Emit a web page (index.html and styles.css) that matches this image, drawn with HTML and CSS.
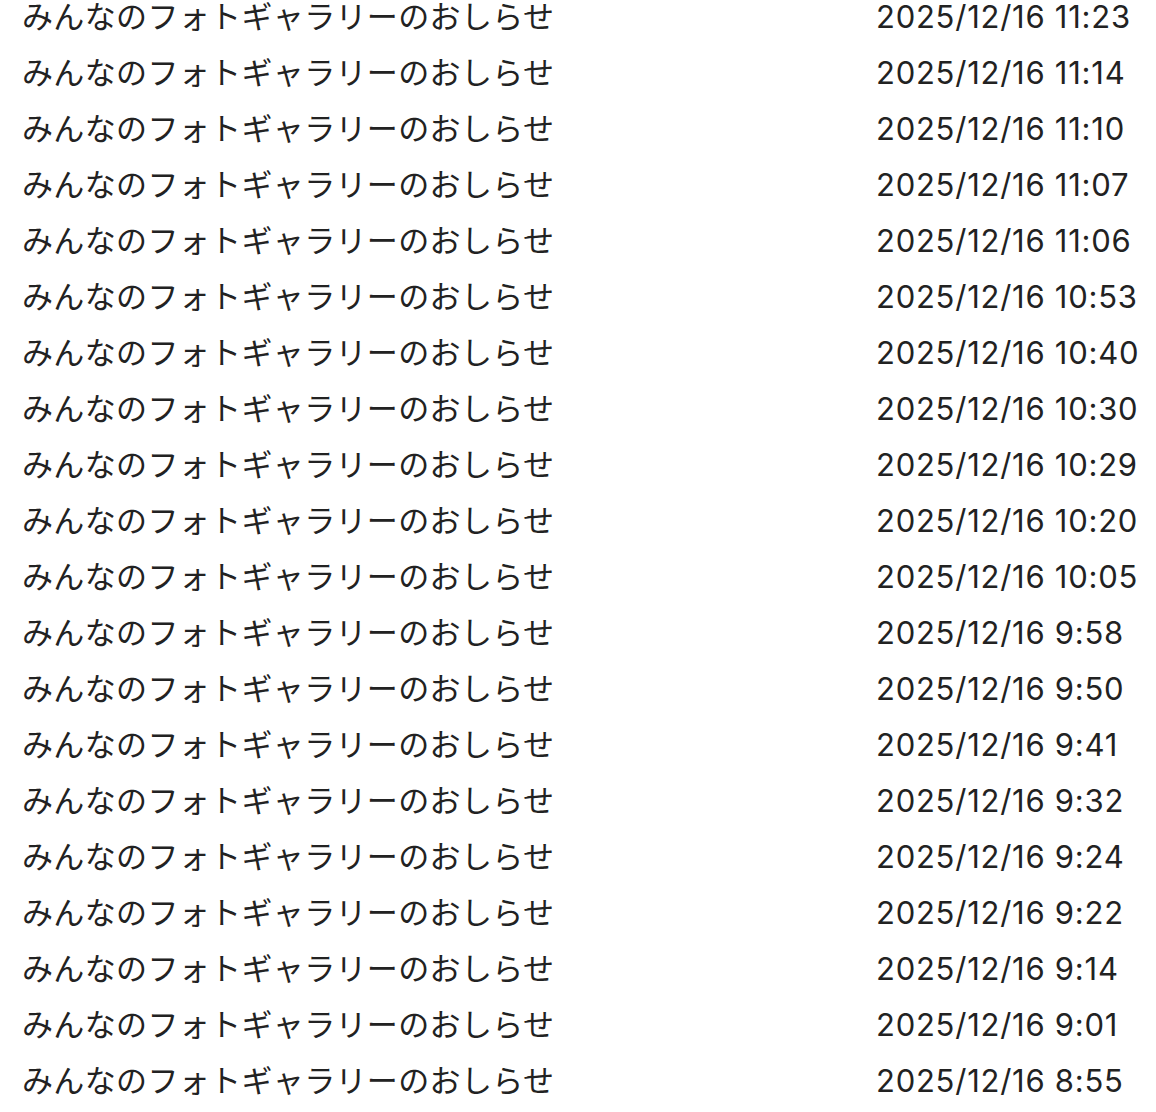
FILE: index.html
```html
<!DOCTYPE html>
<html lang="ja">
<head>
<meta charset="utf-8">
<link rel="stylesheet" href="styles.css">
</head>
<body>
<ul class="news">
  <li class="row"><span class="title">みんなのフォトギャラリーのおしらせ</span><span class="date">2025/12/16 11:23</span></li>
  <li class="row"><span class="title">みんなのフォトギャラリーのおしらせ</span><span class="date">2025/12/16 11:14</span></li>
  <li class="row"><span class="title">みんなのフォトギャラリーのおしらせ</span><span class="date">2025/12/16 11:10</span></li>
  <li class="row"><span class="title">みんなのフォトギャラリーのおしらせ</span><span class="date">2025/12/16 11:07</span></li>
  <li class="row"><span class="title">みんなのフォトギャラリーのおしらせ</span><span class="date">2025/12/16 11:06</span></li>
  <li class="row"><span class="title">みんなのフォトギャラリーのおしらせ</span><span class="date">2025/12/16 10:53</span></li>
  <li class="row"><span class="title">みんなのフォトギャラリーのおしらせ</span><span class="date">2025/12/16 10:40</span></li>
  <li class="row"><span class="title">みんなのフォトギャラリーのおしらせ</span><span class="date">2025/12/16 10:30</span></li>
  <li class="row"><span class="title">みんなのフォトギャラリーのおしらせ</span><span class="date">2025/12/16 10:29</span></li>
  <li class="row"><span class="title">みんなのフォトギャラリーのおしらせ</span><span class="date">2025/12/16 10:20</span></li>
  <li class="row"><span class="title">みんなのフォトギャラリーのおしらせ</span><span class="date">2025/12/16 10:05</span></li>
  <li class="row"><span class="title">みんなのフォトギャラリーのおしらせ</span><span class="date">2025/12/16 9:58</span></li>
  <li class="row"><span class="title">みんなのフォトギャラリーのおしらせ</span><span class="date">2025/12/16 9:50</span></li>
  <li class="row"><span class="title">みんなのフォトギャラリーのおしらせ</span><span class="date">2025/12/16 9:41</span></li>
  <li class="row"><span class="title">みんなのフォトギャラリーのおしらせ</span><span class="date">2025/12/16 9:32</span></li>
  <li class="row"><span class="title">みんなのフォトギャラリーのおしらせ</span><span class="date">2025/12/16 9:24</span></li>
  <li class="row"><span class="title">みんなのフォトギャラリーのおしらせ</span><span class="date">2025/12/16 9:22</span></li>
  <li class="row"><span class="title">みんなのフォトギャラリーのおしらせ</span><span class="date">2025/12/16 9:14</span></li>
  <li class="row"><span class="title">みんなのフォトギャラリーのおしらせ</span><span class="date">2025/12/16 9:01</span></li>
  <li class="row"><span class="title">みんなのフォトギャラリーのおしらせ</span><span class="date">2025/12/16 8:55</span></li>
</ul>
</body>
</html>
```

FILE: styles.css
```css
html, body {
  margin: 0;
  padding: 0;
  background: #ffffff;
}
body {
  font-family: "Inter", "Noto Sans CJK JP", "Noto Sans", sans-serif;
  color: #222222;
  overflow: hidden;
}
.news {
  list-style: none;
  margin: -11px 0 0 0;
  padding: 0 0 0 22px;
}
.row {
  display: grid;
  grid-template-columns: 854px 1fr;
  padding: 11px 0;
  font-size: 31px;
  line-height: 34px;
}
.title, .date {
  white-space: nowrap;
}
.title {
  letter-spacing: 0.35px;
}
.date {
  letter-spacing: 0.75px;
}
```
